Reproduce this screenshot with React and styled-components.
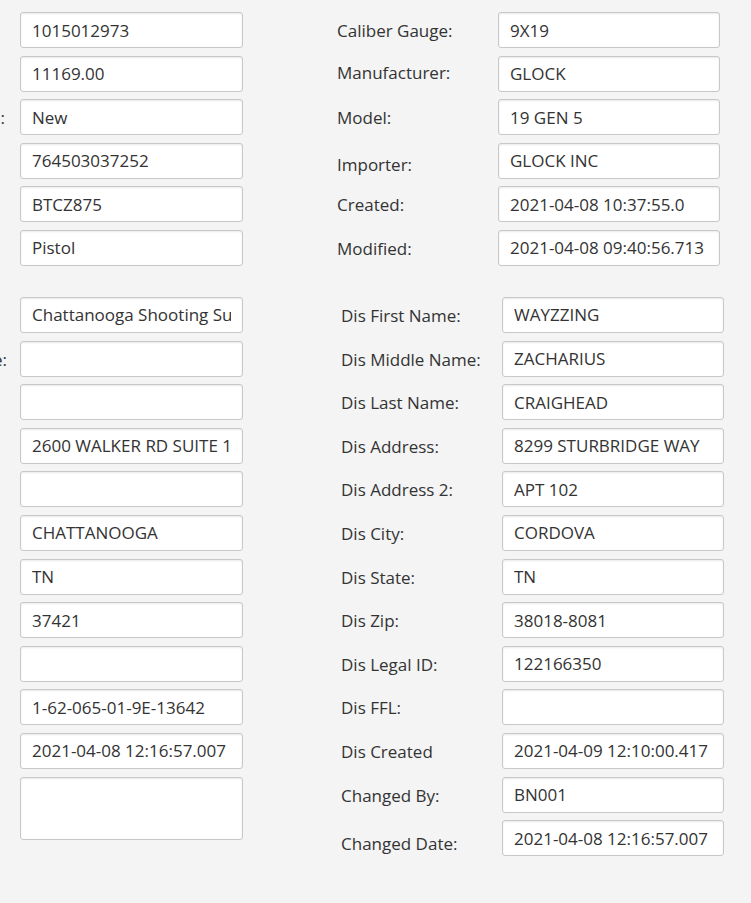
import styled, { createGlobalStyle } from 'styled-components';

const GlobalStyle = createGlobalStyle`
  html, body {
    margin: 0;
    padding: 0;
    background: #f4f4f4;
    overflow: hidden;
  }
  body {
    font-family: 'Segoe UI', 'Open Sans', 'Noto Sans', sans-serif;
    color: #333333;
  }
`;

const purchase = [
  { label: 'Item ID:', value: '1015012973' },
  { label: 'Cost:', value: '11169.00' },
  { label: 'Item Condition:', value: 'New' },
  { label: 'UPC:', value: '764503037252' },
  { label: 'SKU:', value: 'BTCZ875' },
  { label: 'Type:', value: 'Pistol' },
];

const product = [
  { label: 'Caliber Gauge:', value: '9X19' },
  { label: 'Manufacturer:', value: 'GLOCK', drop: -2 },
  { label: 'Model:', value: '19 GEN 5' },
  { label: 'Importer:', value: 'GLOCK INC', drop: 3 },
  { label: 'Created:', value: '2021-04-08 10:37:55.0' },
  { label: 'Modified:', value: '2021-04-08 09:40:56.713' },
];

const acquisition = [
  { label: 'Acq Name:', value: 'Chattanooga Shooting Supplies' },
  { label: 'Acq Middle Name:', value: '' },
  { label: 'Acq Last Name:', value: '' },
  { label: 'Acq Address:', value: '2600 WALKER RD SUITE 101' },
  { label: 'Acq Address 2:', value: '' },
  { label: 'Acq City:', value: 'CHATTANOOGA' },
  { label: 'Acq State:', value: 'TN' },
  { label: 'Acq Zip:', value: '37421' },
  { label: 'Acq Legal ID:', value: '' },
  { label: 'Acq FFL:', value: '1-62-065-01-9E-13642' },
  { label: 'Acq Created', value: '2021-04-08 12:16:57.007' },
  { label: 'Notes:', value: '', area: true },
];

const disposition = [
  { label: 'Dis First Name:', value: 'WAYZZING' },
  { label: 'Dis Middle Name:', value: 'ZACHARIUS' },
  { label: 'Dis Last Name:', value: 'CRAIGHEAD' },
  { label: 'Dis Address:', value: '8299 STURBRIDGE WAY' },
  { label: 'Dis Address 2:', value: 'APT 102' },
  { label: 'Dis City:', value: 'CORDOVA' },
  { label: 'Dis State:', value: 'TN' },
  { label: 'Dis Zip:', value: '38018-8081' },
  { label: 'Dis Legal ID:', value: '122166350' },
  { label: 'Dis FFL:', value: '' },
  { label: 'Dis Created', value: '2021-04-09 12:10:00.417' },
  { label: 'Changed By:', value: 'BN001' },
  { label: 'Changed Date:', value: '2021-04-08 12:16:57.007', drop: 5 },
];

function FieldRows({ rows }) {
  return rows.map((row) => (
    <FieldRow key={row.label}>
      <Label $drop={row.drop || 0}>{row.label}</Label>
      {row.area ? (
        <TextArea readOnly value={row.value} />
      ) : (
        <TextField readOnly value={row.value} />
      )}
    </FieldRow>
  ));
}

export default function App() {
  return (
    <>
      <GlobalStyle />
      <Page>
        <Section>
          <LeftPanel>
            <LeftGrid $gap={15}>
              <FieldRows rows={purchase} />
            </LeftGrid>
          </LeftPanel>
          <RightGrid $indent={94}>
            <FieldRows rows={product} />
          </RightGrid>
        </Section>
        <Section>
          <LeftPanel>
            <LeftGrid $gap={13}>
              <FieldRows rows={acquisition} />
            </LeftGrid>
          </LeftPanel>
          <RightGrid $indent={98}>
            <FieldRows rows={disposition} />
          </RightGrid>
        </Section>
      </Page>
    </>
  );
}

const Page = styled.div`
  display: flex;
  flex-direction: column;
  gap: 31px;
  width: 751px;
  height: 903px;
  padding-top: 12px;
  box-sizing: border-box;
  overflow: hidden;
`;

const Section = styled.section`
  display: flex;
  align-items: flex-start;
`;

const LeftPanel = styled.div`
  display: flex;
  justify-content: flex-end;
  width: 243px;
  flex-shrink: 0;
`;

const LeftGrid = styled.div`
  display: grid;
  grid-template-columns: max-content 223px;
  column-gap: ${(p) => p.$gap}px;
  row-gap: 7.6px;
  flex-shrink: 0;
`;

const RightGrid = styled.div`
  display: grid;
  grid-template-columns: 161px 222px;
  row-gap: 7.6px;
  padding-left: ${(p) => p.$indent}px;
`;

const FieldRow = styled.div`
  display: contents;
`;

const Label = styled.label`
  align-self: start;
  height: 36px;
  line-height: 38px;
  font-size: 17px;
  white-space: nowrap;
  color: #333333;
  position: relative;
  top: ${(p) => p.$drop}px;
`;

const TextField = styled.input`
  box-sizing: border-box;
  width: 100%;
  height: 36px;
  margin: 0;
  padding: 0 11px;
  border: 1px solid #c8c8c8;
  border-radius: 3px;
  background: #ffffff;
  box-shadow: inset 0 1px 2px rgba(0, 0, 0, 0.09);
  font-family: inherit;
  font-size: 17px;
  color: #333333;
  outline: none;
`;

const TextArea = styled.textarea`
  box-sizing: border-box;
  display: block;
  width: 100%;
  height: 63px;
  margin: 0;
  padding: 6px 11px;
  border: 1px solid #c8c8c8;
  border-radius: 3px;
  background: #ffffff;
  box-shadow: inset 0 1px 2px rgba(0, 0, 0, 0.09);
  font-family: inherit;
  font-size: 17px;
  color: #333333;
  resize: none;
  outline: none;
`;
